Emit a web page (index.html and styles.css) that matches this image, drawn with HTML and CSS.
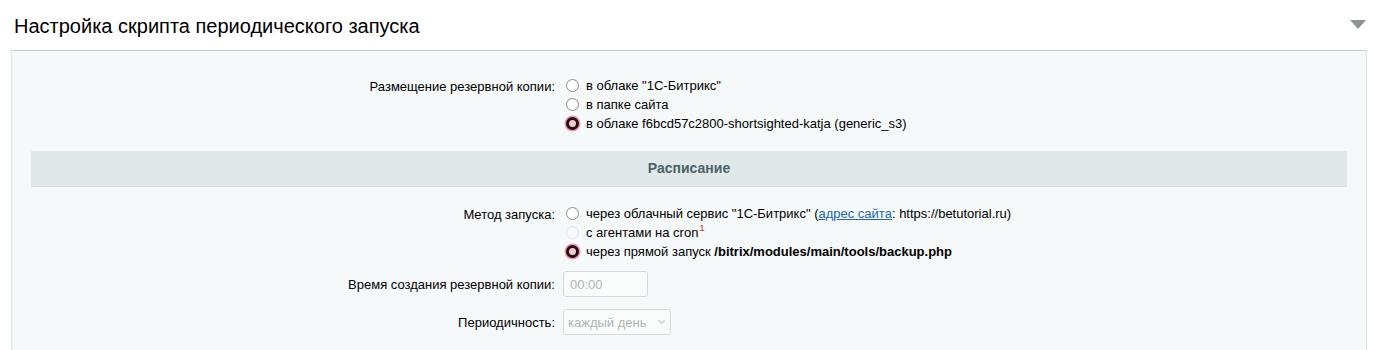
FILE: index.html
```html
<!DOCTYPE html>
<html lang="ru">
<head>
	<meta charset="UTF-8">
	<title>Настройка скрипта периодического запуска</title>
	<link rel="stylesheet" href="styles.css">
</head>
<body>
	<div class="head">
		<h2>Настройка скрипта периодического запуска</h2>
		<span class="toggle"></span>
	</div>
	<div class="panel">
		<div class="row">
			<div class="label">Размещение резервной копии:</div>
			<div class="value">
				<label class="opt"><input type="radio" name="place"> <span>в облаке "1С-Битрикс"</span></label>
				<label class="opt"><input type="radio" name="place"> <span>в папке сайта</span></label>
				<label class="opt"><input type="radio" name="place" checked> <span>в облаке f6bcd57c2800-shortsighted-katja (generic_s3)</span></label>
			</div>
		</div>

		<div class="section">Расписание</div>

		<div class="row">
			<div class="label">Метод запуска:</div>
			<div class="value">
				<label class="opt"><input type="radio" name="method"> <span>через облачный сервис "1С-Битрикс" (<a href="#">адрес сайта</a>: https://betutorial.ru)</span></label>
				<label class="opt"><input type="radio" name="method" disabled> <span>с агентами на cron<sup>1</sup></span></label>
				<label class="opt"><input type="radio" name="method" checked> <span>через прямой запуск <b>/bitrix/modules/main/tools/backup.php</b></span></label>
			</div>
		</div>
		<div class="row mid">
			<div class="label">Время создания резервной копии:</div>
			<div class="value"><input class="field" type="text" value="00:00" disabled></div>
		</div>
		<div class="row mid">
			<div class="label">Периодичность:</div>
			<div class="value">
				<div class="select">каждый день <span class="arrow"></span></div>
			</div>
		</div>
	</div>
</body>
</html>
```
FILE: styles.css
```css
body {
	margin: 0;
	font-family: "Liberation Sans", Arial, sans-serif;
	font-size: 13px;
	color: #000;
	background: #fff;
}
.head {
	display: flex;
	align-items: center;
	justify-content: space-between;
	height: 50px;
	padding: 0 12px 0 14px;
}
.head h2 {
	margin: 0;
	font-weight: normal;
	font-size: 20px;
	color: #000;
	padding-top: 2px;
}
.toggle {
	width: 0;
	height: 0;
	border-left: 8px solid transparent;
	border-right: 8px solid transparent;
	border-top: 9px solid #8e9494;
	margin-top: -2px;
}
.panel {
	margin: 0 11px 0 11px;
	background: #f5f9f9;
	border: 1px solid #dce3e3;
	border-top-color: #c9cdcd;
	border-bottom: 0;
	padding: 25px 19px 0;
	height: 300px;
	box-sizing: border-box;
	overflow: hidden;
}
.row {
	display: grid;
	grid-template-columns: 524px 1fr;
	column-gap: 11px;
	margin-bottom: 10px;
}
.row.mid {
	align-items: center;
	margin-bottom: 12px;
}
.label {
	text-align: right;
	padding-top: 3px;
	color: #000;
}
.row.mid .label {
	padding-top: 0;
}
.value {
	display: flex;
	flex-direction: column;
}
.opt {
	display: flex;
	align-items: center;
	height: 19px;
	white-space: nowrap;
}
.opt input {
	appearance: none;
	width: 13px;
	height: 13px;
	margin: 0 7px 0 0;
	border: 1.5px solid #8a8a8a;
	border-radius: 50%;
	background: #fff;
	box-sizing: border-box;
}
.opt input:checked {
	border: 3px solid #1e1013;
	background: #f4c9cf;
	box-shadow: 0 0 0 1.5px #ef9aa6;
}
.opt input:disabled {
	border-color: #e2e5e5;
	background: #f7f9f9;
}
.opt a {
	color: #2067b0;
	text-decoration: underline;
}
.opt sup {
	color: #d21a1a;
	font-size: 9px;
	line-height: 0;
	vertical-align: 6px;
	margin-left: 1px;
}
.section {
	background: #e0e8ea;
	border-bottom: 1px solid #d9e0e2;
	height: 35px;
	line-height: 35px;
	text-align: center;
	font-weight: bold;
	font-size: 14px;
	color: #4b6267;
	margin: 18px 0 17px;
}
.field {
	width: 85px;
	height: 26px;
	box-sizing: border-box;
	margin: 0 0 0 -3px;
	padding: 0 6px;
	border: 1px solid #d5d9d9;
	border-radius: 3px;
	background: #fafcfc;
	font-family: inherit;
	font-size: 13px;
	color: #b0b5b5;
}
.select {
	display: flex;
	align-items: center;
	justify-content: space-between;
	width: 108px;
	height: 26px;
	box-sizing: border-box;
	margin-left: -3px;
	padding: 0 6px 0 4px;
	border: 1px solid #d5d9d9;
	border-radius: 3px;
	background: #fafcfc;
	color: #b0b5b5;
}
.arrow {
	width: 4px;
	height: 4px;
	border-right: 1px solid #c0c4c4;
	border-bottom: 1px solid #c0c4c4;
	transform: rotate(45deg);
	margin-top: -3px;
}
```
